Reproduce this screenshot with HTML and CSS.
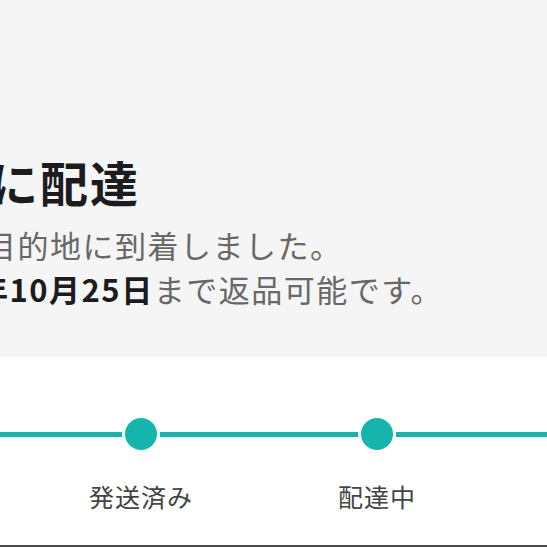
FILE: index.html
```html
<!DOCTYPE html>
<html lang="ja">
<head>
<meta charset="utf-8">
<link rel="stylesheet" href="styles.css">
</head>
<body>
  <section class="summary">
    <h1 class="title">目的地に配達</h1>
    <p class="line line-arrived">目的地に到着しました。</p>
    <p class="line line-return"><strong class="date">年10月25日</strong>まで返品可能です。</p>
  </section>
  <section class="progress">
    <ol class="steps">
      <li class="step">
        <div class="track"><span class="dot"></span></div>
        <span class="label">注文済み</span>
      </li>
      <li class="step">
        <div class="track"><span class="dot"></span></div>
        <span class="label">発送済み</span>
      </li>
      <li class="step">
        <div class="track"><span class="dot"></span></div>
        <span class="label">配達中</span>
      </li>
      <li class="step">
        <div class="track"><span class="dot"></span></div>
        <span class="label">配達済み</span>
      </li>
    </ol>
  </section>
</body>
</html>
```
FILE: styles.css
```css
* {
  box-sizing: border-box;
}

html, body {
  margin: 0;
  padding: 0;
}

body {
  width: 547px;
  height: 547px;
  overflow: hidden;
  background: #ffffff;
  font-family: "Noto Sans CJK JP", "Noto Sans", sans-serif;
}

.summary {
  height: 357px;
  background: #f5f5f5;
  padding-top: 157px;
  overflow: hidden;
}

.title {
  margin: 0 0 18px -160px;
  font-size: 48px;
  line-height: 48px;
  font-weight: 700;
  letter-spacing: 2px;
  color: #1c1c1e;
  white-space: nowrap;
}

.line {
  margin: 0;
  font-size: 31px;
  line-height: 44px;
  letter-spacing: 1.5px;
  color: #686868;
  white-space: nowrap;
}

.line-arrived {
  margin-left: -15px;
}

.line-return {
  margin-left: -23px;
}

.date {
  font-weight: 700;
  color: #1c1c1e;
}

.progress {
  height: 190px;
  background: #ffffff;
  border-bottom: 2px solid #4a4a4a;
  padding-top: 61px;
  overflow: hidden;
}

.steps {
  display: flex;
  list-style: none;
  margin: 0 0 0 -213px;
  padding: 0;
  width: 944px;
}

.step {
  flex: 0 0 236px;
  display: flex;
  flex-direction: column;
  align-items: center;
}

.track {
  width: 100%;
  height: 32px;
  display: flex;
  justify-content: center;
  background: linear-gradient(#26aca4, #26aca4) center / 100% 5px no-repeat;
}

.dot {
  width: 32px;
  height: 32px;
  border-radius: 50%;
  background: #15b5ad;
  box-shadow: 0 0 0 3px #ffffff;
}

.label {
  margin-top: 34px;
  font-size: 25px;
  line-height: 25px;
  letter-spacing: 1px;
  color: #444444;
  white-space: nowrap;
}
```
